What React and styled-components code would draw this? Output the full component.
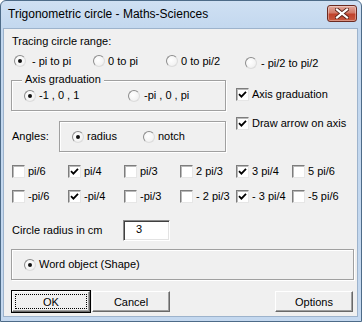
import React from "react";
import styled, { createGlobalStyle } from "styled-components";

const Global = createGlobalStyle`
  html, body { margin: 0; padding: 0; background: #fff; }
  body { font-family: "Liberation Sans", Arial, sans-serif; font-size: 11px; color: #000; }
  * { box-sizing: border-box; }
`;

const Window = styled.div`
  width: 362px;
  height: 322px;
  border: 1px solid #4d6b88;
  border-radius: 6px 6px 0 0;
  background: linear-gradient(#cfe0f3, #c2d7ee 30px, #c4d8ef);
  display: flex;
  flex-direction: column;
  overflow: hidden;
`;

const TitleBar = styled.div`
  height: 27px;
  flex: none;
  display: flex;
  align-items: flex-start;
  justify-content: space-between;
  padding: 4px 4px 0 7px;
`;

const Title = styled.span`
  font-family: "Liberation Sans", Arial, sans-serif;
  font-size: 12px;
  line-height: 19px;
  color: #000;
`;

const CloseButton = styled.div`
  width: 30px;
  height: 17px;
  border: 1px solid #6b2a21;
  border-radius: 3px;
  background: linear-gradient(#e2a89c, #d27a68 45%, #c0412b 55%, #c85a40);
  box-shadow: inset 0 0 0 1px rgba(255, 255, 255, 0.35);
  display: flex;
  align-items: center;
  justify-content: center;
`;

const Client = styled.div`
  flex: 1;
  margin: 0 3px 4px 2px;
  border: 1px solid #9db3cc;
  background: #f0f0f0;
  padding: 6px 0 0 7px;
  display: flex;
  flex-direction: column;
`;

const Label = styled.div`
  height: 13px;
  line-height: 13px;
  margin-left: ${(p) => p.$indent || 1}px;
  width: ${(p) => (p.$width ? `${p.$width}px` : "auto")};
  flex: none;
  white-space: nowrap;
`;

const Row = styled.div`
  display: flex;
  align-items: center;
  margin-top: ${(p) => p.$top || 0}px;
  padding-left: ${(p) => p.$left || 0}px;
  height: ${(p) => (p.$height ? `${p.$height}px` : "auto")};
`;

const OptionWrap = styled.label`
  display: flex;
  align-items: center;
  width: ${(p) => (p.$width ? `${p.$width}px` : "auto")};
  flex: none;
  height: 13px;
  line-height: 13px;
  white-space: nowrap;
  transform: translateY(${(p) => p.$shift || 0}px);
`;

const RadioDot = styled.span`
  width: 12px;
  height: 12px;
  border-radius: 50%;
  border: 1px solid;
  border-color: #8c8c8c #dcdcdc #dcdcdc #8c8c8c;
  background: radial-gradient(circle at 40% 40%, #ffffff, #f4f4f4 60%, #e2e2e2);
  margin-right: ${(p) => p.$gap}px;
  display: flex;
  align-items: center;
  justify-content: center;
  flex: none;
  &::after {
    content: "";
    width: 4px;
    height: 4px;
    border-radius: 50%;
    background: #111;
    display: ${(p) => (p.$on ? "block" : "none")};
  }
`;

const Box = styled.span`
  width: 13px;
  height: 13px;
  border: 1px solid;
  border-color: #7d7d7d #e6e6e6 #e6e6e6 #7d7d7d;
  box-shadow: inset 1px 1px 0 #b9b9b9;
  background: #fff;
  margin-right: 3px;
  flex: none;
  display: flex;
  align-items: center;
  justify-content: center;
`;

const Radio = ({ on, children, width, shift, gap = 4 }) => (
  <OptionWrap $width={width} $shift={shift}>
    <RadioDot $on={on} $gap={gap} />
    {children}
  </OptionWrap>
);

const Check = ({ on, children, width }) => (
  <OptionWrap $width={width}>
    <Box>
      {on && (
        <svg width="9" height="9" viewBox="0 0 9 9">
          <path d="M1 4.2 L3.4 6.6 L8 1.8" stroke="#000" strokeWidth="1.8" fill="none" />
        </svg>
      )}
    </Box>
    {children}
  </OptionWrap>
);

const Section = styled.div`
  display: flex;
  margin-top: 12px;
`;

const LeftCol = styled.div`
  width: 215px;
  display: flex;
  flex-direction: column;
`;

const RightCol = styled.div`
  margin-left: 10px;
  padding-top: 8px;
  display: flex;
  flex-direction: column;
  gap: 16px;
`;

const GroupBox = styled.div`
  position: relative;
  width: ${(p) => p.$width}px;
  height: ${(p) => p.$height}px;
  border: 1px solid #a0a0a0;
  box-shadow: inset 1px 1px 0 #fff, 1px 1px 0 #fff;
  display: flex;
  align-items: center;
  padding-left: ${(p) => p.$padLeft || 12}px;
  padding-top: ${(p) => p.$padTop || 0}px;
  flex: none;
`;

const Legend = styled.span`
  position: absolute;
  left: 10px;
  top: -8px;
  padding: 0 3px 0 3px;
  line-height: 13px;
  background: #f0f0f0;
`;

const Grid = styled.div`
  display: grid;
  grid-template-columns: repeat(6, 56px);
  row-gap: 12px;
  margin-top: 13px;
  margin-left: 1px;
`;

const TextBox = styled.div`
  width: 47px;
  height: 21px;
  border: 1px solid;
  border-color: #8a8a8a #fff #fff #8a8a8a;
  box-shadow: inset 1px 1px 0 #404040, inset -1px -1px 0 #e3e3e3;
  background: #fff;
  padding: 2px 0 0 12px;
  line-height: 13px;
`;

const Buttons = styled.div`
  display: flex;
  width: 343px;
  margin-top: 10px;
`;

const Button = styled.div`
  width: ${(p) => p.$width}px;
  height: 23px;
  margin-left: ${(p) => (p.$push ? "auto" : "0")};
  border: 1px solid ${(p) => (p.$default ? "#000" : "transparent")};
  background: #f0f0f0;
  display: flex;
  flex: none;
  & > span {
    flex: 1;
    display: flex;
    align-items: center;
    justify-content: center;
    border: 1px solid;
    border-color: #fff #696969 #696969 #fff;
    box-shadow: inset -1px -1px 0 #a0a0a0;
    font-size: 11px;
  }
`;

const Focus = styled.span`
  flex: 1;
  height: 100%;
  display: flex;
  align-items: center;
  justify-content: center;
  outline: 1px dotted #000;
  outline-offset: -3px;
`;

export default function App() {
  return (
    <>
      <Global />
      <Window>
        <TitleBar>
          <Title>Trigonometric circle - Maths-Sciences</Title>
          <CloseButton>
            <svg width="14" height="11" viewBox="0 0 14 11">
              <path d="M2 1.5 L12 9.5 M12 1.5 L2 9.5" stroke="#5a241b" strokeWidth="4" strokeLinecap="square" />
              <path d="M2 1.5 L12 9.5 M12 1.5 L2 9.5" stroke="#fff" strokeWidth="2.2" strokeLinecap="square" />
            </svg>
          </CloseButton>
        </TitleBar>
        <Client>
          <Label>Tracing circle range:</Label>
          <Row $top={6} $left={3} $height={14}>
            <Radio on width={79} gap={6}>- pi to pi</Radio>
            <Radio width={73} gap={3}>0 to pi</Radio>
            <Radio width={79} gap={3}>0 to pi/2</Radio>
            <Radio shift={2} gap={4}>- pi/2 to pi/2</Radio>
          </Row>
          <Section>
            <LeftCol>
              <GroupBox $width={215} $height={31} $padLeft={12}>
                <Legend>Axis graduation</Legend>
                <Radio on width={104} gap={3}>-1 , 0 , 1</Radio>
                <Radio gap={4}>-pi , 0 , pi</Radio>
              </GroupBox>
              <Row $top={10}>
                <Label $width={47}>Angles:</Label>
                <GroupBox $width={167} $height={31} $padLeft={12}>
                  <Radio on width={71} gap={3}>radius</Radio>
                  <Radio gap={3}>notch</Radio>
                </GroupBox>
              </Row>
            </LeftCol>
            <RightCol>
              <Check on>Axis graduation</Check>
              <Check on>Draw arrow on axis</Check>
            </RightCol>
          </Section>
          <Grid>
            <Check>pi/6</Check>
            <Check on>pi/4</Check>
            <Check>pi/3</Check>
            <Check>2 pi/3</Check>
            <Check on>3 pi/4</Check>
            <Check>5 pi/6</Check>
            <Check>-pi/6</Check>
            <Check on>-pi/4</Check>
            <Check>-pi/3</Check>
            <Check>- 2 pi/3</Check>
            <Check on>- 3 pi/4</Check>
            <Check>-5 pi/6</Check>
          </Grid>
          <Row $top={17}>
            <Label $width={111}>Circle radius in cm</Label>
            <TextBox>3</TextBox>
          </Row>
          <Row $top={8}>
            <GroupBox $width={343} $height={31} $padLeft={12}>
              <Radio on gap={3}>Word object (Shape)</Radio>
            </GroupBox>
          </Row>
          <Buttons>
            <Button $width={80} $default>
              <span>
                <Focus>OK</Focus>
              </span>
            </Button>
            <Button $width={80}>
              <span>Cancel</span>
            </Button>
            <Button $width={80} $push>
              <span>Options</span>
            </Button>
          </Buttons>
        </Client>
      </Window>
    </>
  );
}
